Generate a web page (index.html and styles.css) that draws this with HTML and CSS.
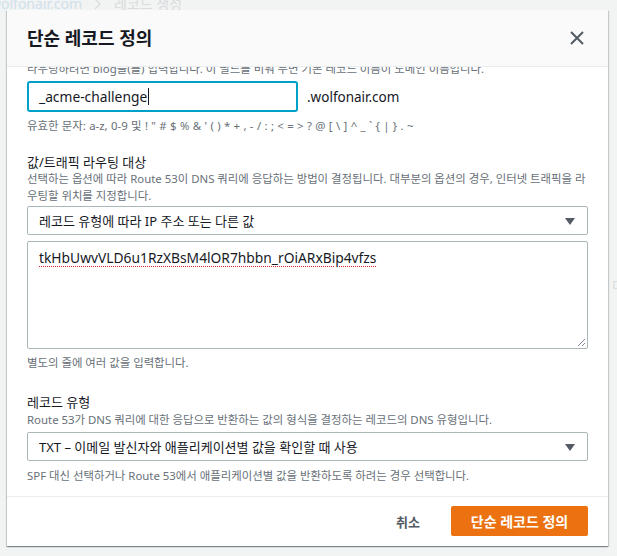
FILE: index.html
```html
<!DOCTYPE html>
<html lang="ko">
<head>
<meta charset="utf-8">
<title>단순 레코드 정의</title>
<link rel="stylesheet" href="styles.css">
</head>
<body>
<div class="page">
  <nav class="crumbs">
    <span class="crumb-link">wolfonair.com</span>
    <svg class="crumb-sep" width="8" height="12" viewBox="0 0 8 12"><path d="M1 1l5 5-5 5" fill="none" stroke="#dadddd" stroke-width="1.3"/></svg>
    <span class="crumb-current">레코드 생성</span>
  </nav>
  <p class="bg-line">레코드 이름 다</p>
</div>

<div class="modal" role="dialog">
  <header class="modal-header">
    <h2 class="modal-title">단순 레코드 정의</h2>
    <svg class="close" width="14" height="14" viewBox="0 0 14 14"><path d="M1 1L13 13M13 1L1 13" stroke="#545b64" stroke-width="2" fill="none"/></svg>
  </header>

  <div class="modal-body">
    <p class="desc cut">라우팅하려면 blog을(를) 입력합니다. 이 필드를 비워 두면 기본 레코드 이름이 도메인 이름입니다.</p>
    <div class="name-row">
      <div class="input focused"><span class="value">_acme-challenge</span><span class="cursor"></span></div>
      <span class="suffix">.wolfonair.com</span>
    </div>
    <p class="hint hint-1">유효한 문자: a-z, 0-9 및 ! &quot; # $ % &amp; ' ( ) * + , - / : ; &lt; = &gt; ? @ [ \ ] ^ _ ` { | } . ~</p>

    <p class="label label-1">값/트래픽 라우팅 대상</p>
    <p class="desc desc-2">선택하는 옵션에 따라 Route 53이 DNS 쿼리에 응답하는 방법이 결정됩니다. 대부분의 옵션의 경우, 인터넷 트래픽을 라우팅할 위치를 지정합니다.</p>
    <div class="select select-1">
      <span>레코드 유형에 따라 IP 주소 또는 다른 값</span>
      <svg class="caret" width="10" height="7" viewBox="0 0 10 7"><path d="M0 0H10L5 7Z" fill="#545b64"/></svg>
    </div>
    <div class="textarea">
      <span class="spell">tkHbUwvVLD6u1RzXBsM4lOR7hbbn_rOiARxBip4vfzs</span>
      <svg class="grip" width="9" height="9" viewBox="0 0 9 9"><path d="M8 1L1 8M8 5L5 8" stroke="#7d8998" stroke-width="1" fill="none"/></svg>
    </div>
    <p class="hint hint-2">별도의 줄에 여러 값을 입력합니다.</p>

    <p class="label label-2">레코드 유형</p>
    <p class="desc desc-3">Route 53가 DNS 쿼리에 대한 응답으로 반환하는 값의 형식을 결정하는 레코드의 DNS 유형입니다.</p>
    <div class="select select-2">
      <span>TXT – 이메일 발신자와 애플리케이션별 값을 확인할 때 사용</span>
      <svg class="caret" width="10" height="7" viewBox="0 0 10 7"><path d="M0 0H10L5 7Z" fill="#545b64"/></svg>
    </div>
    <p class="hint hint-3">SPF 대신 선택하거나 Route 53에서 애플리케이션별 값을 반환하도록 하려는 경우 선택합니다.</p>
  </div>

  <footer class="modal-footer">
    <button class="btn-link">취소</button>
    <button class="btn-primary">단순 레코드 정의</button>
  </footer>
</div>
</body>
</html>
```

FILE: styles.css
```css
* { box-sizing: border-box; margin: 0; padding: 0; }
html, body { height: 100%; }
body {
  background: #f2f3f3;
  font-family: "Noto Sans", "Noto Sans CJK KR", sans-serif;
  color: #16191f;
  overflow: hidden;
  position: relative;
}

.page { padding: 0; }
.crumbs {
  display: flex;
  align-items: center;
  gap: 12px;
  margin-left: -10px;
  margin-top: -5px;
  font-size: 14px;
  line-height: 18px;
}
.crumb-link { color: #cfe1eb; }
.crumb-current { color: #d9dcdc; }
.bg-line {
  margin-top: 264px;
  text-align: right;
  margin-right: -8px;
  font-size: 14px;
  line-height: 18px;
  color: #dcdfdf;
}

.modal {
  position: absolute;
  left: 7px;
  top: 10px;
  width: 601px;
  height: 536px;
  background: #fff;
  display: flex;
  flex-direction: column;
  box-shadow: 0 1px 1px 0 rgba(0,28,36,.3), 1px 1px 1px 0 rgba(0,28,36,.15), -1px 1px 1px 0 rgba(0,28,36,.15);
}
.modal-header {
  flex: none;
  height: 57px;
  background: #fafafa;
  border-bottom: 1px solid #eaeded;
  display: flex;
  align-items: center;
  justify-content: space-between;
  padding: 0 24px 0 20px;
}
.modal-title {
  font-size: 18px;
  font-weight: 700;
  line-height: 22px;
  color: #16191f;
}
.close { display: block; }

.modal-body {
  flex: 1;
  overflow: hidden;
  padding: 0 20px;
  display: flex;
  flex-direction: column;
}
.desc, .hint {
  font-size: 11.4px;
  line-height: 17px;
  color: #687078;
}
.hint { line-height: 16px; }
.cut { margin-top: -7px; white-space: nowrap; }

.name-row {
  margin-top: 4px;
  display: flex;
  align-items: center;
  gap: 9px;
}
.input {
  width: 271px;
  height: 31px;
  border: 2px solid #00a1c9;
  border-radius: 3px;
  padding: 0 10px;
  display: flex;
  align-items: center;
  font-size: 13.8px;
}
.cursor {
  display: inline-block;
  width: 1px;
  height: 17px;
  background: #16191f;
  margin-left: 1px;
}
.suffix { font-size: 13.5px; }

.hint-1 { margin-top: 6px; word-spacing: 0.4px; }
.label {
  font-size: 13px;
  line-height: 16px;
  color: #16191f;
}
.label-1 { margin-top: 20px; }
.desc-2 { margin-top: 0; }

.select {
  height: 29px;
  border: 1px solid #aab7b8;
  border-radius: 2px;
  padding: 0 12px 0 11px;
  display: flex;
  align-items: center;
  justify-content: space-between;
  font-size: 13px;
}
.caret { display: block; margin-top: 2px; }
.select-1 { margin-top: 2px; }

.textarea {
  position: relative;
  margin-top: 6px;
  height: 108px;
  border: 1px solid #aab7b8;
  border-radius: 2px;
  padding: 6px 11px;
  font-size: 13.8px;
  line-height: 20px;
}
.spell {
  text-decoration: underline dotted #e0262b;
  text-decoration-thickness: 1px;
  text-underline-offset: 3px;
}
.grip { position: absolute; right: 1px; bottom: 1px; }

.hint-2 { margin-top: 6px; }
.label-2 { margin-top: 23px; }
.desc-3 { margin-top: 1px; line-height: 18px; }
.select-2 { margin-top: 3px; }
.hint-3 { margin-top: 7px; }

.modal-footer {
  flex: none;
  height: 50px;
  border-top: 1px solid #eaeded;
  display: flex;
  align-items: center;
  justify-content: flex-end;
  padding: 0 20px;
  gap: 11px;
}
.btn-link {
  background: none;
  border: none;
  font-family: inherit;
  font-size: 13px;
  font-weight: 700;
  color: #545b64;
  padding: 0 20px;
  line-height: 30px;
}
.btn-primary {
  background: #ec7211;
  border: none;
  border-radius: 2px;
  font-family: inherit;
  font-size: 14px;
  font-weight: 700;
  color: #fff;
  height: 30px;
  width: 137px;
  padding: 0;
  margin-top: -1px;
}
```
